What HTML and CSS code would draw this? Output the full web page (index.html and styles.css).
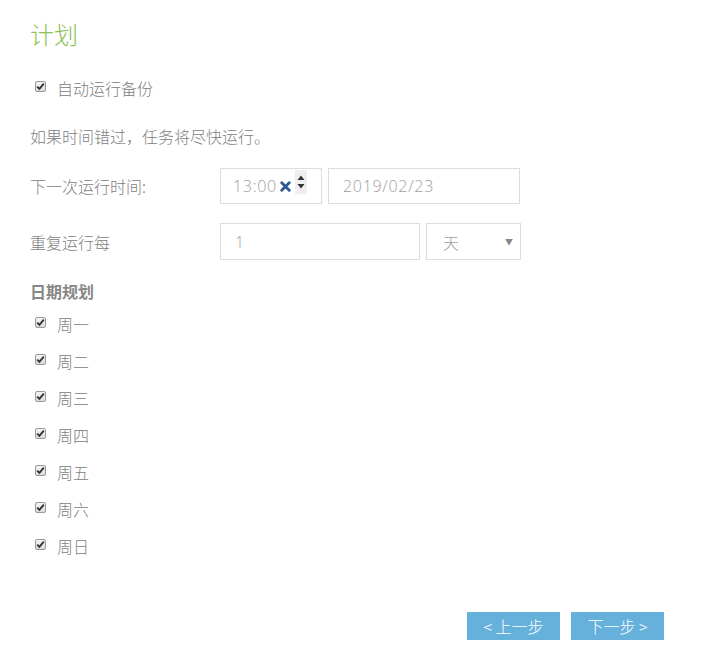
FILE: index.html
```html
<!DOCTYPE html>
<html lang="zh">
<head>
<meta charset="utf-8">
<link rel="stylesheet" href="styles.css">
</head>
<body>
<div class="page">
  <h1 class="title">计划</h1>
  <label class="check-row first"><span class="cb"><svg viewBox="0 0 11 11" width="11" height="11"><path d="M2.2 5.6 L4.4 7.9 L8.8 2.6" fill="none" stroke="#333" stroke-width="1.9"/></svg></span><span>自动运行备份</span></label>
  <p class="note">如果时间错过，任务将尽快运行。</p>
  <div class="form-row row1">
    <span class="label">下一次运行时间:</span>
    <div class="box time">
      <span class="val">13:00</span>
      <svg class="clear" viewBox="0 0 10 10" width="11" height="11"><path d="M1.6 1.6 L8.4 8.4 M8.4 1.6 L1.6 8.4" stroke="#2d5a96" stroke-width="2.6" stroke-linecap="round"/></svg>
      <span class="spin"><svg viewBox="0 0 10 18" width="10" height="18"><path d="M5 2.5 L8.5 7 L1.5 7 Z M1.5 11 L8.5 11 L5 15.5 Z" fill="#333"/></svg></span>
    </div>
    <div class="box date"><span class="val">2019/02/23</span></div>
  </div>
  <div class="form-row row2">
    <span class="label">重复运行每</span>
    <div class="box num"><span class="val">1</span></div>
    <div class="box sel"><span class="cn">天</span><span class="arrow">▼</span></div>
  </div>
  <h2 class="section">日期规划</h2>
  <div class="days">
    <label class="check-row"><span class="cb"><svg viewBox="0 0 11 11" width="11" height="11"><path d="M2.2 5.6 L4.4 7.9 L8.8 2.6" fill="none" stroke="#333" stroke-width="1.9"/></svg></span><span>周一</span></label>
    <label class="check-row"><span class="cb"><svg viewBox="0 0 11 11" width="11" height="11"><path d="M2.2 5.6 L4.4 7.9 L8.8 2.6" fill="none" stroke="#333" stroke-width="1.9"/></svg></span><span>周二</span></label>
    <label class="check-row"><span class="cb"><svg viewBox="0 0 11 11" width="11" height="11"><path d="M2.2 5.6 L4.4 7.9 L8.8 2.6" fill="none" stroke="#333" stroke-width="1.9"/></svg></span><span>周三</span></label>
    <label class="check-row"><span class="cb"><svg viewBox="0 0 11 11" width="11" height="11"><path d="M2.2 5.6 L4.4 7.9 L8.8 2.6" fill="none" stroke="#333" stroke-width="1.9"/></svg></span><span>周四</span></label>
    <label class="check-row"><span class="cb"><svg viewBox="0 0 11 11" width="11" height="11"><path d="M2.2 5.6 L4.4 7.9 L8.8 2.6" fill="none" stroke="#333" stroke-width="1.9"/></svg></span><span>周五</span></label>
    <label class="check-row"><span class="cb"><svg viewBox="0 0 11 11" width="11" height="11"><path d="M2.2 5.6 L4.4 7.9 L8.8 2.6" fill="none" stroke="#333" stroke-width="1.9"/></svg></span><span>周六</span></label>
    <label class="check-row"><span class="cb"><svg viewBox="0 0 11 11" width="11" height="11"><path d="M2.2 5.6 L4.4 7.9 L8.8 2.6" fill="none" stroke="#333" stroke-width="1.9"/></svg></span><span>周日</span></label>
  </div>
  <div class="actions">
    <button class="btn">&lt; 上一步</button>
    <button class="btn">下一步 &gt;</button>
  </div>
</div>
</body>
</html>
```
FILE: styles.css
```css
* { box-sizing: border-box; }
html, body { margin: 0; padding: 0; background: #fff; }
body {
  font-family: "Noto Sans CJK SC", sans-serif;
  color: #808080;
  font-size: 16px;
  font-weight: 300;
}
.page {
  width: 704px;
  height: 659px;
  padding: 16px 40px 0 30px;
  display: flex;
  flex-direction: column;
}
.title {
  margin: 0;
  font-size: 24px;
  line-height: 36px;
  height: 36px;
  font-weight: 300;
  color: #8cc152;
}
.check-row {
  display: flex;
  align-items: center;
  height: 20px;
  line-height: 20px;
  padding-left: 5px;
}
.check-row.first { margin-top: 26px; }
.cb {
  width: 11px;
  height: 11px;
  border: 1px solid #999;
  border-radius: 2px;
  background: linear-gradient(#f4f4f4, #dcdcdc);
  margin-right: 11px;
  margin-top: -3px;
  position: relative;
  flex: none;
}
.cb svg { position: absolute; left: -1px; top: -1px; }
.note {
  margin: 28px 0 0;
  line-height: 20px;
  height: 20px;
}
.form-row {
  display: flex;
  align-items: center;
}
.row1 { margin-top: 22px; height: 36px; }
.row2 { margin-top: 19px; height: 37px; }
.label { width: 190px; flex: none; }
.box {
  height: 100%;
  border: 1px solid #ddd;
  display: flex;
  align-items: center;
  color: #a0a0a0;
  flex: none;
}
.val {
  font-family: "Open Sans", sans-serif;
  font-weight: 300;
  font-size: 16px;
  letter-spacing: 0.7px;
}
.time { width: 102px; padding-left: 12px; }
.date { width: 192px; padding-left: 14px; margin-left: 6px; }
.num { width: 200px; padding-left: 14px; }
.sel { width: 95px; margin-left: 6px; padding-left: 16px; justify-content: space-between; padding-right: 7px; }
.clear { margin-left: 3px; margin-top: 1px; flex: none; }
.spin {
  margin-left: 4px;
  margin-top: -8px;
  width: 12px;
  height: 24px;
  background: #efefef;
  display: flex;
  align-items: center;
  justify-content: center;
  flex: none;
}
.arrow { font-size: 8px; color: #888; }
.section {
  margin: 21px 0 0;
  font-size: 16px;
  line-height: 20px;
  height: 20px;
  font-weight: 700;
  color: #888;
}
.days {
  margin-top: 13px;
  display: flex;
  flex-direction: column;
  gap: 17px;
}
.actions {
  margin-top: 56px;
  display: flex;
  justify-content: flex-end;
  gap: 11px;
}
.btn {
  width: 93px;
  height: 28px;
  border: 0;
  background: #66b1dc;
  color: #fff;
  font-family: "Noto Sans CJK SC", sans-serif;
  font-weight: 300;
  font-size: 16px;
  padding: 0;
}
```
